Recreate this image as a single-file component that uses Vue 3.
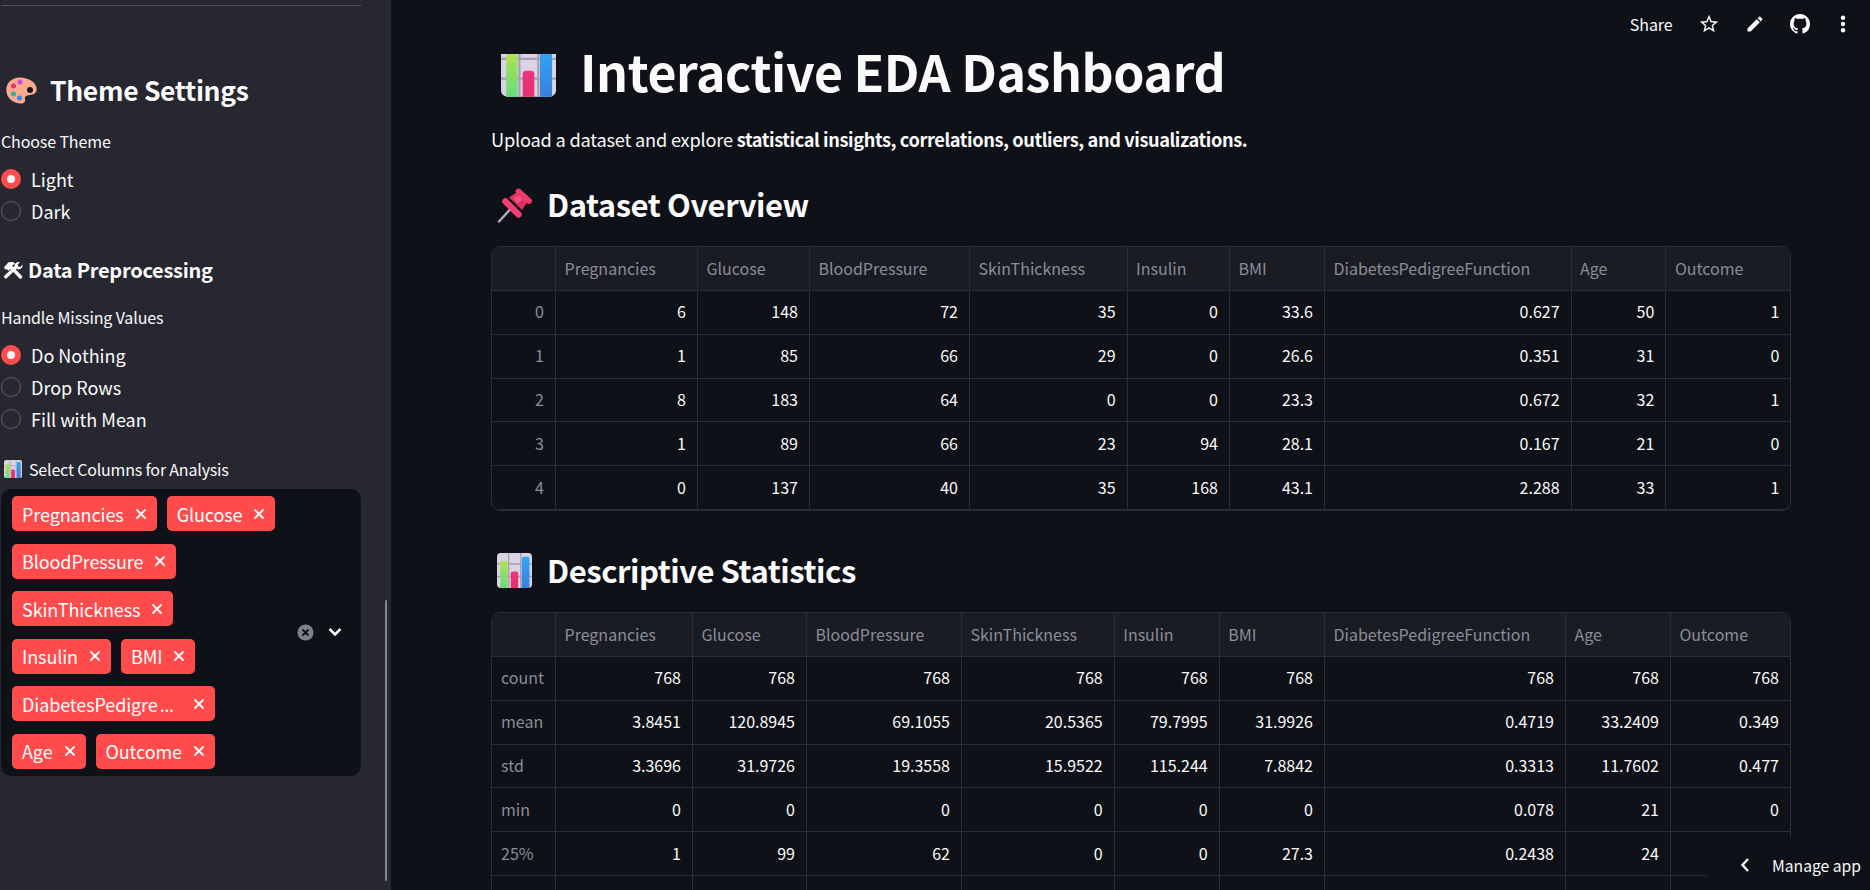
<template>
  <div class="app">
    <svg class="defs" width="0" height="0">
      <defs>
        <linearGradient id="barGreen" x1="0" y1="0" x2="0" y2="1">
          <stop offset="0" stop-color="#b4e04f" />
          <stop offset="1" stop-color="#63dd7c" />
        </linearGradient>
        <linearGradient id="barPink" x1="0" y1="0" x2="0" y2="1">
          <stop offset="0" stop-color="#e8357f" />
          <stop offset="1" stop-color="#ea2f6c" />
        </linearGradient>
        <linearGradient id="barBlue" x1="0" y1="0" x2="0" y2="1">
          <stop offset="0" stop-color="#2fa8f5" />
          <stop offset="1" stop-color="#3a7fdc" />
        </linearGradient>
        <g id="chartEmoji">
          <rect x="0" y="0" width="32" height="32" rx="3.5" fill="#d9d3e2" />
          <path d="M0 10h32M0 21.5h32M10.7 0v32M21.7 0v32" stroke="#a8a1b6" stroke-width="1.3" />
          <path d="M3 32V9a2 2 0 0 1 2-2h2.6a2 2 0 0 1 2 2v23z" fill="url(#barGreen)" />
          <path d="M12.6 32V19a2 2 0 0 1 2-2h2.8a2 2 0 0 1 2 2v13z" fill="url(#barPink)" />
          <path d="M22.7 32V5.500a2 2 0 0 1 2-2h3a2 2 0 0 1 2 2V32z" fill="url(#barBlue)" />
        </g>
      </defs>
    </svg>

    <aside class="sidebar">
      <div class="rule"></div>

      <h2 class="side-title">
        <svg class="palette" viewBox="0 0 31 27">
          <path d="M14 0.500C6 0.500 0.300 5.500 0.300 13c0 8 7 13.500 14.500 13.500 3.500 0 4.700-1.800 4.200-4-.5-2.500.5-4 3.300-4.300 3.700-.4 8.400-1.200 8.400-6C30.700 5.500 22.500 0.500 14 0.500z" fill="#fba98f" />
          <circle cx="24" cy="13" r="3" fill="#15161c" />
          <circle cx="14" cy="5" r="2.500" fill="#c24fe0" />
          <circle cx="7.500" cy="9" r="2.500" fill="#ea2f7c" />
          <circle cx="7.500" cy="17" r="2.500" fill="#2fb39b" />
          <circle cx="13.500" cy="21" r="2.500" fill="#3b82f0" />
        </svg>
        <span>Theme Settings</span>
      </h2>

      <div class="field-label first">Choose Theme</div>
      <div class="radios">
        <div v-for="opt in themeOptions" :key="opt" class="radio-row">
          <span class="radio" :class="{ on: opt === 'Light' }"></span>
          <span>{{ opt }}</span>
        </div>
      </div>

      <h3 class="side-sub">
        <svg class="tools" viewBox="0 0 20 18">
          <path d="M7.500 5.500L17.500 16" stroke="#fafafa" stroke-width="3.400" stroke-linecap="round" />
          <path d="M1 6.300L5.600 1.300 10.500 1 12 3 9 4.500 9.300 6.500 5.500 9.800 3.700 8 2.500 8.800z" fill="#fafafa" />
          <path d="M2.800 15.800L13.400 5.600" stroke="#fafafa" stroke-width="3.400" stroke-linecap="round" />
          <path d="M11.500 4.700C11.700 2 14.500 0.300 17 1.100L14.500 3.700 15.300 5.600 17.300 6 19.500 3.500C20 6.500 17.500 9 14.400 8.300z" fill="#fafafa" />
        </svg>
        <span>Data Preprocessing</span>
      </h3>

      <div class="field-label second">Handle Missing Values</div>
      <div class="radios">
        <div v-for="opt in missingOptions" :key="opt" class="radio-row">
          <span class="radio" :class="{ on: opt === 'Do Nothing' }"></span>
          <span>{{ opt }}</span>
        </div>
      </div>

      <div class="field-label third">
        <svg class="chart-sm" viewBox="0 0 32 32"><use href="#chartEmoji" /></svg>
        <span>Select Columns for Analysis</span>
      </div>

      <div class="multi">
        <div class="tags">
          <span v-for="col in tagLabels" :key="col.text" class="tag">
            <span>{{ col.text }}<span v-if="col.cut" class="dots">…</span></span>
            <svg class="tag-x" viewBox="0 0 18 18">
              <path d="M5 5l8 8M13 5l-8 8" stroke="#fff" stroke-width="1.800" stroke-linecap="round" />
            </svg>
          </span>
        </div>
        <div class="multi-actions">
          <svg class="clear" viewBox="0 0 18 18">
            <circle cx="9" cy="9" r="8.500" fill="#7d808e" />
            <path d="M5.800 5.800l6.400 6.400M12.200 5.800l-6.400 6.400" stroke="#0e1117" stroke-width="2" />
          </svg>
          <svg class="chev" viewBox="0 0 14 10">
            <path d="M1.500 2l5.500 5.500L12.500 2" fill="none" stroke="#fafafa" stroke-width="2.500" />
          </svg>
        </div>
      </div>

      <div class="scrollbar"></div>
    </aside>

    <main class="main">
      <h1 class="title">
        <svg class="chart-lg" viewBox="0 8 32 24"><use href="#chartEmoji" /></svg>
        <span class="title-text">Interactive EDA Dashboard</span>
      </h1>
      <p class="intro">
        Upload a dataset and explore
        <strong>statistical insights, correlations, outliers, and visualizations.</strong>
      </p>

      <h2 class="section first-section">
        <svg class="emoji-md" viewBox="0 0 35 35">
          <path d="M2 33.500L13 21.500" stroke="#b5abbd" stroke-width="2.400" stroke-linecap="round" />
          <path d="M12 9.500L23 2 32 11.500 25 22z" fill="#e2305f" />
          <path d="M16 10L24.500 5.500 28 9 20.500 16z" fill="#f1507f" />
          <path d="M8.500 13.500L21.500 26.500" stroke="#f0406f" stroke-width="6.500" stroke-linecap="round" />
          <path d="M21.500 3.500L32 13" stroke="#ee3a68" stroke-width="5.800" stroke-linecap="round" />
        </svg>
        <span class="section-text">Dataset Overview</span>
      </h2>
      <div class="table-wrap">
        <div class="grid t1">
          <div v-for="(h, i) in ['', ...columnsFull]" :key="i" class="cell head">{{ h }}</div>
          <template v-for="(row, r) in overviewRows" :key="r">
            <div v-for="(val, i) in row" :key="i" class="cell" :class="i === 0 ? 'idx right' : 'num'">{{ val }}</div>
          </template>
        </div>
      </div>

      <h2 class="section">
        <svg class="emoji-md" viewBox="0 0 32 32"><use href="#chartEmoji" /></svg>
        <span class="section-text">Descriptive Statistics</span>
      </h2>
      <div class="table-wrap">
        <div class="grid t2">
          <div v-for="(h, i) in ['', ...columnsFull]" :key="i" class="cell head">{{ h }}</div>
          <template v-for="(row, r) in statRows" :key="r">
            <div v-for="(val, i) in row" :key="i" class="cell" :class="i === 0 ? 'idx' : 'num'">{{ val }}</div>
          </template>
        </div>
      </div>
    </main>

    <div class="toolbar">
      <span class="share">Share</span>
      <svg class="tool-icon star" viewBox="0 0 24 24">
        <path fill="#fafafa" d="M22 9.240l-7.190-.62L12 2 9.190 8.630 2 9.240l5.460 4.730L5.820 21 12 17.270 18.180 21l-1.630-7.030L22 9.240zM12 15.400l-3.760 2.270 1-4.280-3.320-2.880 4.380-.38L12 6.100l1.710 4.040 4.380.38-3.320 2.880 1 4.280L12 15.400z" />
      </svg>
      <svg class="tool-icon pencil" viewBox="0 0 24 24">
        <path fill="#fafafa" d="M3 17.250V21h3.750L17.810 9.940l-3.750-3.750L3 17.250zM20.710 7.040c.39-.39.39-1.020 0-1.410l-2.340-2.340c-.39-.39-1.020-.39-1.410 0l-1.830 1.830 3.750 3.750 1.830-1.830z" />
      </svg>
      <svg class="tool-icon github" viewBox="0 0 16 16">
        <path fill="#fafafa" d="M8 0C3.580 0 0 3.580 0 8c0 3.540 2.290 6.530 5.470 7.590.4.070.55-.17.55-.38 0-.19-.01-.82-.01-1.490-2.010.37-2.530-.49-2.690-.94-.09-.23-.48-.94-.82-1.130-.28-.15-.68-.52-.01-.53.63-.01 1.080.58 1.230.82.72 1.210 1.870.87 2.330.66.070-.52.28-.87.51-1.070-1.780-.2-3.640-.89-3.640-3.950 0-.87.31-1.590.82-2.150-.08-.2-.36-1.020.08-2.120 0 0 .67-.21 2.200.82.64-.18 1.320-.27 2-.27.68 0 1.360.09 2 .27 1.530-1.040 2.200-.82 2.200-.82.44 1.100.16 1.920.08 2.120.51.56.82 1.270.82 2.150 0 3.070-1.870 3.750-3.650 3.950.29.25.54.73.54 1.480 0 1.070-.01 1.930-.01 2.200 0 .21.15.46.55.38A8.013 8.013 0 0016 8c0-4.420-3.580-8-8-8z" />
      </svg>
      <svg class="tool-icon kebab" viewBox="0 0 6 18">
        <circle cx="3" cy="2.800" r="2.200" fill="#fafafa" />
        <circle cx="3" cy="9" r="2.200" fill="#fafafa" />
        <circle cx="3" cy="15.200" r="2.200" fill="#fafafa" />
      </svg>
    </div>

    <div class="manage">
      <svg class="manage-chev" viewBox="0 0 10 16">
        <path d="M8 2L2.500 8 8 14" fill="none" stroke="#fafafa" stroke-width="2.400" />
      </svg>
      <span>Manage app</span>
    </div>
  </div>
</template>

<script setup>
const themeOptions = ['Light', 'Dark']
const missingOptions = ['Do Nothing', 'Drop Rows', 'Fill with Mean']

const columnsFull = [
  'Pregnancies', 'Glucose', 'BloodPressure', 'SkinThickness', 'Insulin',
  'BMI', 'DiabetesPedigreeFunction', 'Age', 'Outcome',
]

// long names get cut in the multiselect chip
const tagLabels = columnsFull.map(name =>
  name.length > 20 ? { text: name.slice(0, 15), cut: true } : { text: name, cut: false }
)

const overviewRows = [
  ['0', '6', '148', '72', '35', '0', '33.6', '0.627', '50', '1'],
  ['1', '1', '85', '66', '29', '0', '26.6', '0.351', '31', '0'],
  ['2', '8', '183', '64', '0', '0', '23.3', '0.672', '32', '1'],
  ['3', '1', '89', '66', '23', '94', '28.1', '0.167', '21', '0'],
  ['4', '0', '137', '40', '35', '168', '43.1', '2.288', '33', '1'],
]

// last outcome sits under the Manage app pill, next row falls below the fold
const statRows = [
  ['count', '768', '768', '768', '768', '768', '768', '768', '768', '768'],
  ['mean', '3.8451', '120.8945', '69.1055', '20.5365', '79.7995', '31.9926', '0.4719', '33.2409', '0.349'],
  ['std', '3.3696', '31.9726', '19.3558', '15.9522', '115.244', '7.8842', '0.3313', '11.7602', '0.477'],
  ['min', '0', '0', '0', '0', '0', '0', '0.078', '21', '0'],
  ['25%', '1', '99', '62', '0', '0', '27.3', '0.2438', '24', ''],
  Array(10).fill(''),
]
</script>

<style>
html, body { margin: 0; background: #0e1117; overflow: hidden; }
</style>

<style scoped>
.app {
  position: relative;
  display: flex;
  width: 1870px; height: 890px;
  overflow: hidden;
  background: #0e1117; color: #fafafa;
  font-family: "Noto Sans CJK SC", "Noto Sans", sans-serif;
}
.defs { position: absolute; }

/* sidebar */
.sidebar {
  position: relative;
  flex: 0 0 391px;
  box-sizing: border-box;
  padding: 5px 0 0 1px;
  background: #262730;
}
.rule { width: 360px; height: 1px; background: #50515a; }
.side-title {
  display: flex; align-items: center; gap: 13px;
  margin: 64px 0 0; padding-left: 5px;
  font-size: 26.5px; line-height: 40px; font-weight: 600; letter-spacing: -0.33px;
}
.palette { width: 31px; height: 27px; }
.field-label {
  display: flex; align-items: center;
  font-size: 16px; line-height: 24px; letter-spacing: -0.12px;
}
.field-label.first { margin-top: 19px; }
.field-label.second { margin-top: 19px; }
.field-label.third { margin-top: 22px; gap: 7px; padding-left: 3px; letter-spacing: -0.18px; }
.chart-sm { width: 18px; height: 18px; }
.radios { margin-top: 10px; }
.radio-row {
  display: flex; align-items: center; gap: 10px;
  height: 32px;
  font-size: 18px;
}
.radio {
  box-sizing: border-box;
  width: 20px; height: 20px;
  border: 1px solid #5e5f69; border-radius: 50%;
}
.radio.on {
  border: 6px solid #ff4b4b;
  background: #f4f4f6;
}
.side-sub {
  display: flex; align-items: center; gap: 5px;
  margin: 27px 0 0; padding-left: 2px;
  font-size: 20px; line-height: 32px; font-weight: 600; letter-spacing: -0.27px;
}
.tools { width: 20px; height: 18px; }

.multi {
  display: flex; align-items: center; justify-content: space-between;
  box-sizing: border-box;
  width: 360px; margin-top: 8px;
  padding: 7px 19px 7px 11px;
  background: #0e1117; border-radius: 10px;
}
.tags {
  display: flex; flex-wrap: wrap; gap: 12.5px 10px;
  width: 265px;
}
.tag {
  display: flex; align-items: center;
  box-sizing: border-box;
  height: 35px; padding: 0 7px 0 10px;
  background: #ff4b4b; border-radius: 5px;
  font-size: 18px; color: #fff; letter-spacing: -0.1px; white-space: nowrap;
}
.dots { margin: 0 8px 0 2px; font-family: "Noto Sans", sans-serif; }
.tag-x { width: 18px; height: 18px; margin-left: 8px; }
.multi-actions { display: flex; align-items: center; gap: 14px; }
.clear { width: 17px; height: 17px; }
.chev { width: 14px; height: 10px; }
.scrollbar {
  position: absolute; left: 385px; top: 600px;
  width: 2px; height: 281px;
  background: #85868d; border-radius: 1px;
}

/* main */
.main {
  flex: 1;
  box-sizing: border-box;
  padding: 40px 79px 0 100px;
}
.title {
  display: flex; align-items: center; gap: 24px;
  height: 64px; margin: 0; padding-left: 10px;
  font-size: 50px; line-height: 64px; font-weight: 700; letter-spacing: -0.4px;
}
.title-text { margin-top: -4px; }
.chart-lg { width: 55px; height: 44px; margin-top: 7px; }
.intro {
  margin: 21px 0 0;
  font-size: 18.2px; line-height: 28px; letter-spacing: -0.2px;
}
.intro strong { font-weight: 600; letter-spacing: -0.4px; }
.section {
  display: flex; align-items: center; gap: 15px;
  height: 44px; margin: 38px 0 0; padding-left: 6px;
  font-size: 31px; line-height: 44px; font-weight: 600; letter-spacing: -0.45px;
}
.section-text { margin-top: -2px; }
.first-section { margin-top: 30px; }
.emoji-md { width: 35px; height: 35px; }

.table-wrap {
  box-sizing: border-box;
  width: 1300px; margin-top: 19px;
  border: 1px solid #2a2c33; border-radius: 9px;
  overflow: hidden;
}
.grid { display: grid; grid-template-rows: 44px; grid-auto-rows: 43.8px; }
.t1 { grid-template-columns: 64px 142px 112px 160px 157.6px 102.4px 95px 246.6px 94.8px 124px; }
.t2 { grid-template-columns: 64px 137px 114px 155px 152.7px 105px 105.3px 241px 105px 119px; }
.cell {
  display: flex; align-items: center;
  box-sizing: border-box;
  padding: 0 11px 2px;
  border-right: 1px solid #2a2c33; border-bottom: 1px solid #2a2c33;
  font-size: 16px; white-space: nowrap;
}
.cell:nth-child(10n) { border-right: none; }
.head {
  background: #1a1c24; color: #8a8d97;
  padding: 0 0 1px 8.5px;
}
.idx { color: #8a8d97; padding-left: 9px; }
.idx.right, .num { justify-content: flex-end; }

/* top right */
.toolbar {
  position: absolute; top: 0; right: 0;
  display: flex; align-items: center;
  height: 47px; padding-right: 24px;
  font-size: 16px;
}
.share { margin-right: 25px; letter-spacing: -0.1px; }
.tool-icon { display: block; }
.star { width: 22px; height: 22px; margin-right: 25px; }
.pencil { width: 20px; height: 20px; margin-right: 25px; }
.github { width: 20px; height: 20px; margin-right: 30.5px; }
.kebab { width: 6px; height: 18px; }

.manage {
  position: absolute; right: 0; bottom: 0;
  display: flex; align-items: center;
  box-sizing: border-box;
  width: 163px; height: 52px;
  padding: 2px 0 0 33px;
  background: #0e1117;
  font-size: 15.7px;
}
.manage-chev { width: 10px; height: 16px; margin-right: 22px; }
</style>
